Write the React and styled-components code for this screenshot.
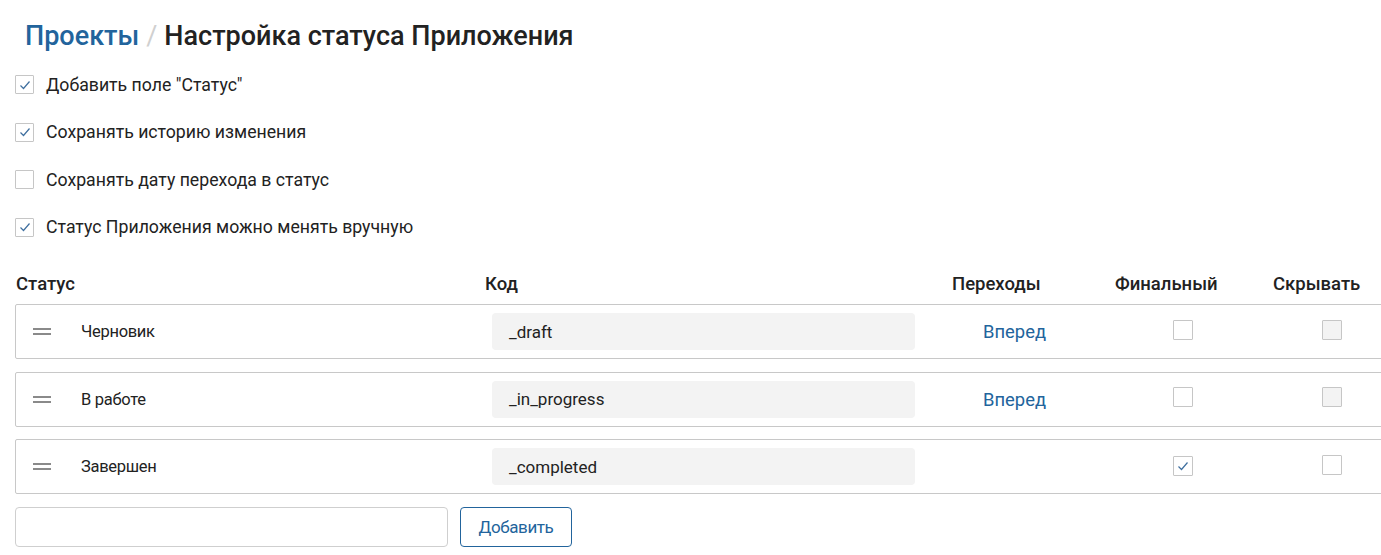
import styled, { createGlobalStyle } from 'styled-components';

const GlobalStyle = createGlobalStyle`
  body {
    margin: 0;
    background: #fff;
    font-family: Roboto, "Noto Sans", sans-serif;
    color: #222;
  }
`;

const Page = styled.div`
  width: 1381px;
  height: 555px;
  overflow: hidden;
  padding: 0 0 0 15px;
  box-sizing: border-box;
`;

/**
|--------------------------------------------------
| Header
|--------------------------------------------------
*/

const Breadcrumbs = styled.h1`
  margin: 0;
  padding: 12px 0 0 10px;
  height: 60px;
  box-sizing: border-box;
  font-size: 27px;
  font-weight: 500;
  display: flex;
  align-items: center;
  gap: 7px;
  line-height: 34px;
`;

const Crumb = styled.span`
  color: #22649c;
`;

const Slash = styled.span`
  color: #d0d0d0;
  font-weight: 400;
`;

const Current = styled.span`
  color: #222;
`;

/**
|--------------------------------------------------
| Options
|--------------------------------------------------
*/

const Options = styled.div`
  display: flex;
  flex-direction: column;
  padding-top: 1px;
`;

const Option = styled.label`
  display: flex;
  align-items: center;
  gap: 12px;
  height: 47.5px;
  font-size: 17.7px;
  color: #222;
`;

const Box = styled.span`
  display: inline-flex;
  align-items: center;
  justify-content: center;
  width: ${p => p.size || 20}px;
  height: ${p => p.size || 20}px;
  box-sizing: border-box;
  border: 1px solid #c6c6c6;
  border-radius: 1px;
  background: ${p => (p.disabled ? '#f3f3f3' : '#fff')};
  flex: none;
`;

const Check = ({ checked, disabled, size }) => (
  <Box size={size} disabled={disabled}>
    {checked && (
      <svg width="14" height="14" viewBox="0 0 14 14">
        <polyline points="2.5,7.5 5.5,10.5 11.5,3.5" fill="none" stroke="#3f6f9f" strokeWidth="1.2" />
      </svg>
    )}
  </Box>
);

/**
|--------------------------------------------------
| Status table
|--------------------------------------------------
*/

const HeadRow = styled.div`
  display: grid;
  grid-template-columns: 469px 467px 163px 158px auto;
  height: 40px;
  margin-top: 13px;
  align-items: center;
  font-size: 18.5px;
  font-weight: 500;
  color: #222;
  padding-left: 1px;
`;

const Rows = styled.div`
  display: flex;
  flex-direction: column;
  gap: 12.5px;
`;

const Row = styled.div`
  display: grid;
  grid-template-columns: 65px 411px 423px 258px 149px auto;
  align-items: center;
  height: 55px;
  box-sizing: border-box;
  width: 1380px;
  border: 1px solid #c8c8c8;
  border-radius: 2px;
`;

const Handle = styled.span`
  margin-left: 17px;
  width: 18px;
  height: 3px;
  border-top: 2px solid #8a8a8a;
  border-bottom: 2px solid #8a8a8a;
`;

const Name = styled.span`
  font-size: 16.5px;
  letter-spacing: -0.3px;
  color: #222;
`;

const Code = styled.div`
  height: 37px;
  display: flex;
  align-items: center;
  padding-left: 17px;
  background: #f3f3f3;
  border-radius: 4px;
  font-size: 17px;
  color: #222;
`;

const Link = styled.a`
  margin-left: 68px;
  font-size: 18.4px;
  color: #22649c;
  text-decoration: none;
`;

/**
|--------------------------------------------------
| Add form
|--------------------------------------------------
*/

const AddForm = styled.div`
  display: flex;
  gap: 12px;
  margin-top: 13px;
`;

const Input = styled.div`
  width: 433px;
  height: 40px;
  box-sizing: border-box;
  border: 1px solid #cfcfcf;
  border-radius: 4px;
`;

const Button = styled.button`
  width: 112px;
  height: 40px;
  border: 1px solid #22649c;
  border-radius: 4px;
  background: #fff;
  color: #22649c;
  font-family: Roboto, sans-serif;
  font-size: 17px;
  letter-spacing: -0.4px;
`;

const options = [
  { label: 'Добавить поле "Статус"', checked: true },
  { label: 'Сохранять историю изменения', checked: true },
  { label: 'Сохранять дату перехода в статус', checked: false },
  { label: 'Статус Приложения можно менять вручную', checked: true },
];

const statuses = [
  { name: 'Черновик', code: '_draft', next: 'Вперед', final: false, hideDisabled: true },
  { name: 'В работе', code: '_in_progress', next: 'Вперед', final: false, hideDisabled: true },
  { name: 'Завершен', code: '_completed', next: null, final: true, hideDisabled: false },
];

const App = () => (
  <Page>
    <GlobalStyle />
    <Breadcrumbs>
      <Crumb>Проекты</Crumb>
      <Slash>/</Slash>
      <Current>Настройка статуса Приложения</Current>
    </Breadcrumbs>

    <Options>
      {options.map(o => (
        <Option key={o.label}>
          <Check size={19} checked={o.checked} />
          {o.label}
        </Option>
      ))}
    </Options>

    <HeadRow>
      <span>Статус</span>
      <span>Код</span>
      <span>Переходы</span>
      <span>Финальный</span>
      <span>Скрывать</span>
    </HeadRow>

    <Rows>
      {statuses.map(s => (
        <Row key={s.code}>
          <Handle />
          <Name>{s.name}</Name>
          <Code>{s.code}</Code>
          <div>{s.next && <Link>{s.next}</Link>}</div>
          <div><Check checked={s.final} /></div>
          <div><Check disabled={s.hideDisabled} /></div>
        </Row>
      ))}
    </Rows>

    <AddForm>
      <Input />
      <Button>Добавить</Button>
    </AddForm>
  </Page>
);

export default App;
